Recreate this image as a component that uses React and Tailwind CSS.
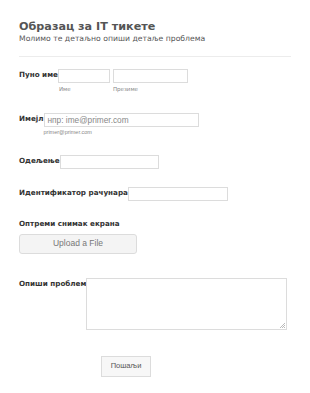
import React from "react";

const V = { fontFamily: '"DejaVu Sans", Verdana, sans-serif' };
const A = { fontFamily: '"Liberation Sans", Arial, sans-serif' };

function Label({ children }) {
  return (
    <div className="text-[7.2px] font-bold text-[#333] leading-[11px] whitespace-nowrap" style={V}>
      {children}
    </div>
  );
}

function Input({ w, placeholder }) {
  return (
    <div
      className="h-[14px] border border-[#dcdcdc] bg-white flex items-center px-[3px] text-[8.3px] text-[#888]"
      style={{ ...A, width: w }}
    >
      {placeholder}
    </div>
  );
}

export default function App() {
  return (
    <div className="w-[310px] h-[393px] bg-white relative overflow-hidden" style={V}>
      <div className="pl-[19px] pr-[19px] pt-[20px]">
        <div className="text-[11.2px] font-bold text-[#555] leading-[14px]">Образац за IT тикете</div>
        <div className="text-[7.7px] text-[#555] leading-[10px]">Молимо те детаљно опиши детаље проблема</div>
        <div className="h-px bg-[#ececec] mt-[12px]"></div>

        <div className="flex items-start mt-[12px]">
          <Label>Пуно име</Label>
          <div className="flex gap-[3px]">
            <div>
              <Input w={52} />
              <div className="text-[5.5px] text-[#888] mt-[2px] pl-[1px]" style={V}>Име</div>
            </div>
            <div>
              <Input w={75} />
              <div className="text-[5.5px] text-[#888] mt-[2px]" style={V}>Презиме</div>
            </div>
          </div>
        </div>

        <div className="flex items-start mt-[20px]">
          <Label>Имејл</Label>
          <div>
            <Input w={155} placeholder="нпр: ime@primer.com" />
            <div className="text-[5.5px] text-[#888] mt-[1px]" style={A}>primer@primer.com</div>
          </div>
        </div>

        <div className="flex items-start mt-[18px]">
          <Label>Одељење</Label>
          <Input w={99} />
        </div>

        <div className="flex items-start mt-[18px]">
          <Label>Идентификатор рачунара</Label>
          <Input w={100} />
        </div>

        <div className="mt-[17px]">
          <Label>Оптреми снимак екрана</Label>
          <div
            className="mt-[5px] w-[118px] h-[20px] rounded-[3px] border border-[#dcdcdc] bg-[#f4f4f4] flex items-center justify-center text-[8.5px] text-[#777]"
            style={A}
          >
            Upload a File
          </div>
        </div>

        <div className="flex items-start mt-[24px]">
          <Label>Опиши проблем</Label>
          <div className="relative w-[201px] h-[52px] border border-[#dcdcdc] bg-white">
            <svg className="absolute right-[1px] bottom-[1px]" width="5" height="5" viewBox="0 0 5 5">
              <path d="M5 0 L0 5 M5 2 L2 5 M5 4 L4 5" stroke="#aaa" strokeWidth="0.8" />
            </svg>
          </div>
        </div>

        <div className="flex mt-[26px] pl-[82px]">
          <div
            className="w-[50px] h-[21px] border border-[#dcdcdc] bg-[#f7f7f7] flex items-center justify-center text-[7.5px] text-[#555]"
            style={A}
          >
            Пошаљи
          </div>
        </div>
      </div>
    </div>
  );
}
